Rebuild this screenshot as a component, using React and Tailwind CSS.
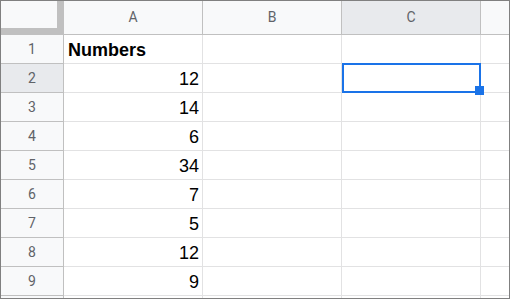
import React from "react";

const rows = [
  { a: "Numbers", bold: true },
  { a: "12" },
  { a: "14" },
  { a: "6" },
  { a: "34" },
  { a: "7" },
  { a: "5" },
  { a: "12" },
  { a: "9" },
];

const hdrFont = { fontFamily: "Roboto, 'Liberation Sans', sans-serif" };
const cellFont = { fontFamily: "'Liberation Sans', Arial, sans-serif" };

export default function App() {
  return (
    <div className="w-[510px] h-[299px] bg-white overflow-hidden border border-[#808080]">
      <div className="relative grid grid-cols-[63px_139px_139px_139px_28px] grid-rows-[34px_repeat(9,29px)_2px]">
        {/* corner */}
        <div className="bg-[#c0c0c0]">
          <div className="w-[56px] h-[27px] bg-[#f8f9fa]" />
        </div>
        {["A", "B", "C"].map((c) => (
          <div
            key={c}
            style={hdrFont}
            className={`flex items-center justify-center border-r border-b border-[#c0c0c0] text-[14px] text-[#5f6368] ${
              c === "C" ? "bg-[#e8eaed]" : "bg-[#f8f9fa]"
            }`}
          >
            {c}
          </div>
        ))}
        <div className="border-b border-[#c0c0c0] bg-[#f8f9fa]" />

        {rows.map((r, i) => (
          <React.Fragment key={i}>
            <div
              style={hdrFont}
              className={`flex items-center justify-center border-r border-b border-[#c0c0c0] text-[14px] text-[#5f6368] ${
                i === 1 ? "bg-[#e8eaed]" : "bg-[#f8f9fa]"
              }`}
            >
              {i + 1}
            </div>
            <div
              style={cellFont}
              className={`flex items-end pb-[2px] border-r border-b border-[#e2e2e3] text-[18px] leading-[21px] text-black ${
                r.bold ? "font-bold justify-start pl-[4px]" : "justify-end pr-[3px]"
              }`}
            >
              {r.a}
            </div>
            <div className="border-r border-b border-[#e2e2e3]" />
            <div className="border-r border-b border-[#e2e2e3]" />
            <div className="border-b border-[#e2e2e3]" />
          </React.Fragment>
        ))}
        <div className="border-r border-[#c0c0c0] bg-[#f8f9fa]" />
        <div className="border-r border-[#e2e2e3]" />
        <div className="border-r border-[#e2e2e3]" />
        <div className="border-r border-[#e2e2e3]" />
        <div />

        {/* selection C2 */}
        <div className="absolute left-[341px] top-[62px] w-[139px] h-[30px] border-2 border-[#1a73e8]" />
        <div className="absolute left-[474px] top-[85px] w-[9px] h-[9px] bg-[#1a73e8]" />
      </div>
    </div>
  );
}
